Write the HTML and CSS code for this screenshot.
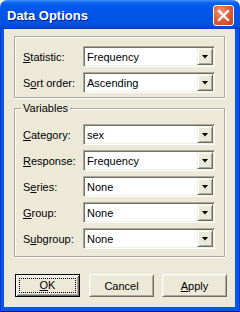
FILE: index.html
```html
<!DOCTYPE html>
<html lang="en">
<head>
  <meta charset="UTF-8" />
  <meta name="viewport" content="width=device-width, initial-scale=1.0"/>
  <title>Data Options</title>
  <link rel="stylesheet" href="styles.css">
</head>
<body>

  <div class="window">

    <!-- title bar -->
    <div class="titlebar">
      <span class="title">Data Options</span>
      <button class="close-btn" aria-label="Close">
        <svg width="19" height="19" viewBox="0 0 19 19">
          <path d="M5 5 L14 14 M14 5 L5 14" stroke="#fff" stroke-width="2.2" stroke-linecap="square" fill="none"/>
        </svg>
      </button>
    </div>

    <div class="frame">
      <div class="client">

        <!-- statistic group -->
        <div class="group group-top">
          <div class="row">
            <label class="label"><u>S</u>tatistic:</label>
            <div class="combo"><span class="value">Frequency</span><span class="drop"></span></div>
          </div>
          <div class="row">
            <label class="label">S<u>o</u>rt order:</label>
            <div class="combo"><span class="value">Ascending</span><span class="drop"></span></div>
          </div>
        </div>

        <!-- variables group -->
        <div class="group group-vars">
          <span class="legend">Variables</span>
          <div class="row">
            <label class="label"><u>C</u>ategory:</label>
            <div class="combo"><span class="value">sex</span><span class="drop"></span></div>
          </div>
          <div class="row">
            <label class="label"><u>R</u>esponse:</label>
            <div class="combo"><span class="value">Frequency</span><span class="drop"></span></div>
          </div>
          <div class="row">
            <label class="label">S<u>e</u>ries:</label>
            <div class="combo"><span class="value">None</span><span class="drop"></span></div>
          </div>
          <div class="row">
            <label class="label"><u>G</u>roup:</label>
            <div class="combo"><span class="value">None</span><span class="drop"></span></div>
          </div>
          <div class="row">
            <label class="label">S<u>u</u>bgroup:</label>
            <div class="combo"><span class="value">None</span><span class="drop"></span></div>
          </div>
        </div>

        <!-- dialog buttons -->
        <div class="buttons">
          <button class="btn btn-default"><span class="focus"><u>O</u>K</span></button>
          <button class="btn">Cancel</button>
          <button class="btn"><u>A</u>pply</button>
        </div>

      </div>
    </div>
  </div>

</body>
</html>
```

FILE: styles.css
```css
* { margin: 0; padding: 0; box-sizing: border-box; }
body {
  background: #ffffff;
  font-family: "Liberation Sans", Arial, sans-serif;
  font-size: 11px;
  color: #000;
}
.window {
  width: 240px;
  height: 312px;
  display: flex;
  flex-direction: column;
}

/* title bar */
.titlebar {
  height: 29px;
  flex: none;
  display: flex;
  justify-content: space-between;
  align-items: flex-start;
  padding: 0 6px 0 7px;
  border-radius: 7px 7px 0 0;
  background: linear-gradient(#3d8ef7 0, #0a63ee 3px, #0058ee 6px, #0055e5 14px, #0054e3 23px, #0049d8 27px, #003dc9 29px);
}
.title {
  margin-top: 8px;
  font-weight: bold;
  font-size: 13px;
  line-height: 15px;
  color: #fff;
  text-shadow: 1px 1px 0 #0a1c86;
}
.close-btn {
  margin-top: 5px;
  width: 21px;
  height: 21px;
  border: 1px solid #fff;
  border-radius: 3px;
  background: radial-gradient(circle at 35% 30%, #f59a7c 0%, #e2603a 45%, #c83e19 100%);
  display: flex;
  align-items: center;
  justify-content: center;
}

/* window frame and client area */
.frame {
  flex: 1;
  padding: 0 5px 5px 4px;
  background: #0756e6;
  box-shadow: inset 1px 0 #0831d9, inset -1px 0 #0831d9, inset 0 -1px #00138c;
}
.client {
  height: 100%;
  background: #ece9d8;
  padding: 7px 0 0 10px;
}

/* etched group boxes */
.group {
  width: 211px;
  border: 1px solid #aca899;
  box-shadow: inset 1px 1px #fff, 1px 1px #fff;
  display: flex;
  flex-direction: column;
  gap: 5px;
}
.group-top { padding: 9px 9px 4px 8px; }
.group-vars {
  margin-top: 10px;
  padding: 0 9px 7px 8px;
}
.legend {
  align-self: flex-start;
  margin: -7px 0 4px -2px;
  padding: 0 2px;
  line-height: 13px;
  background: #ece9d8;
}

.row {
  display: flex;
  align-items: center;
}
.label {
  width: 60px;
  flex: none;
}

/* combo boxes */
.combo {
  width: 132px;
  height: 21px;
  display: flex;
  align-items: center;
  background: #fff;
  border: 1px solid;
  border-color: #aca899 #fff #fff #aca899;
  box-shadow: inset 1px 1px #716f64, inset -1px -1px #f1efe2;
  padding: 1px;
}
.value {
  flex: 1;
  padding-left: 2px;
}
.drop {
  width: 16px;
  height: 17px;
  background: #ece9d8;
  border: 1px solid;
  border-color: #f1efe2 #716f64 #716f64 #f1efe2;
  box-shadow: inset 1px 1px #fff, inset -1px -1px #aca899;
  display: flex;
  align-items: center;
  justify-content: center;
}
.drop::after {
  content: "";
  width: 7px;
  height: 4px;
  background: #000;
  clip-path: polygon(0 0, 7px 0, 3.5px 4px);
}

/* buttons */
.buttons {
  display: flex;
  gap: 9px;
  margin-top: 17px;
  padding-left: 1px;
}
.btn {
  width: 65px;
  height: 23px;
  font-family: "Liberation Sans", Arial, sans-serif;
  font-size: 11px;
  color: #000;
  background: #ece9d8;
  border: 1px solid;
  border-color: #fff #716f64 #716f64 #fff;
  box-shadow: inset 1px 1px #f1efe2, inset -1px -1px #aca899;
}
.btn:last-child { margin-left: -1px; }
.btn-default {
  border-color: #000;
  box-shadow: inset 1px 1px #fff, inset -1px -1px #716f64, inset 2px 2px #f1efe2, inset -2px -2px #aca899;
  padding: 3px;
}
.focus {
  display: block;
  height: 100%;
  border: 1px dotted #000;
  line-height: 13px;
}
```
